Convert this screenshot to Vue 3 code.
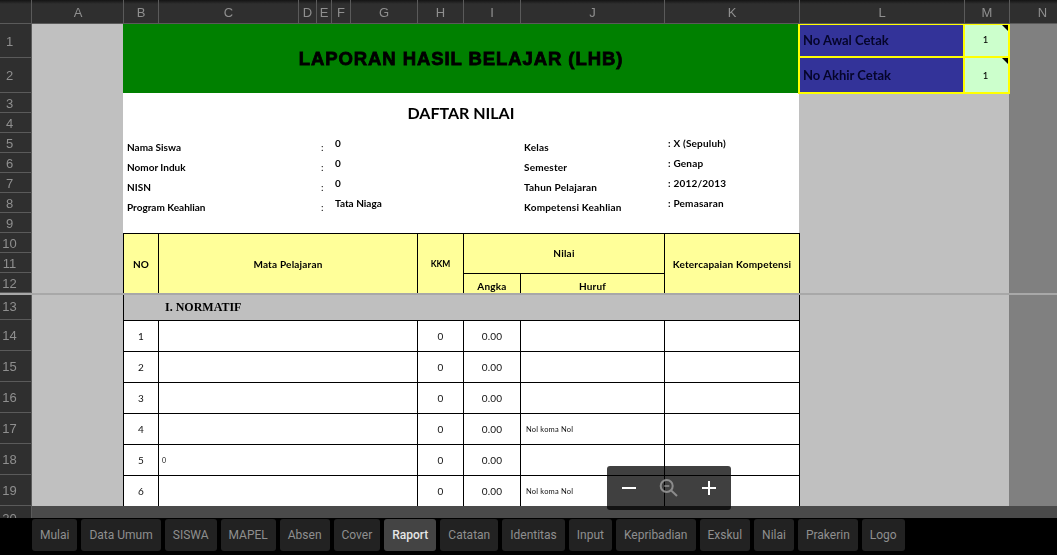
<script setup>
const cols = ['A','B','C','D','E','F','G','H','I','J','K','L','M','N']
const rowNums = Array.from({ length: 20 }, (_, i) => i + 1)
const info = [
  { row: 5, label: 'Nama Siswa', value: '0', rLabel: 'Kelas', rValue: ': X (Sepuluh)' },
  { row: 6, label: 'Nomor Induk', value: '0', rLabel: 'Semester', rValue: ': Genap' },
  { row: 7, label: 'NISN', value: '0', rLabel: 'Tahun Pelajaran', rValue: ': 2012/2013' },
  { row: 8, label: 'Program Keahlian', value: 'Tata Niaga', rLabel: 'Kompetensi Keahlian', rValue: ': Pemasaran' }
]
const rows = [
  { row: 14, no: 1, name: '', huruf: '' },
  { row: 15, no: 2, name: '', huruf: '' },
  { row: 16, no: 3, name: '', huruf: '' },
  { row: 17, no: 4, name: '', huruf: 'Nol koma Nol' },
  { row: 18, no: 5, name: '0', huruf: '' },
  { row: 19, no: 6, name: '', huruf: 'Nol koma Nol' }
]
const tabs = ['Mulai','Data Umum','SISWA','MAPEL','Absen','Cover','Raport','Catatan','Identitas','Input','Kepribadian','Exskul','Nilai','Prakerin','Logo']
</script>

<template>
  <div class="app">
    <div class="sheet">
      <div class="grid">
        <div class="corner"></div>
        <div v-for="c in cols" :key="c" class="colhead" :class="{ first: c === 'A', last: c === 'N' }">{{ c }}</div>
        <div v-for="n in rowNums" :key="n" class="rowhead" :style="{ gridRow: n + 1 }">{{ n }}</div>

        <div class="side-a"></div>
        <div class="side-lm"></div>
        <div class="side-n"></div>

        <div class="title">LAPORAN HASIL BELAJAR (LHB)</div>
        <div class="paper"></div>
        <div class="subtitle">DAFTAR NILAI</div>

        <div class="ctl-label r1">No Awal Cetak</div>
        <div class="ctl-value r1">1</div>
        <div class="ctl-label r2">No Akhir Cetak</div>
        <div class="ctl-value r2">1</div>

        <template v-for="i in info" :key="i.row">
          <div class="info i-label" :style="{ gridRow: i.row + 1 }">{{ i.label }}</div>
          <div class="info i-colon" :style="{ gridRow: i.row + 1 }">:</div>
          <div class="info i-value" :style="{ gridRow: i.row + 1 }">{{ i.value }}</div>
          <div class="info i-rlabel" :style="{ gridRow: i.row + 1 }">{{ i.rLabel }}</div>
          <div class="info i-rvalue" :style="{ gridRow: i.row + 1 }">{{ i.rValue }}</div>
        </template>

        <div class="th th-no">NO</div>
        <div class="th th-mapel">Mata Pelajaran</div>
        <div class="th th-kkm">KKM</div>
        <div class="th th-nilai">Nilai</div>
        <div class="th th-angka">Angka</div>
        <div class="th th-huruf">Huruf</div>
        <div class="th th-ket edge">Ketercapaian Kompetensi</div>

        <div class="section edge"><span>I. NORMATIF</span></div>

        <template v-for="r in rows" :key="r.row">
          <div class="td c-no" :style="{ gridRow: r.row + 1 }">{{ r.no }}</div>
          <div class="td c-name" :style="{ gridRow: r.row + 1 }">{{ r.name }}</div>
          <div class="td c-kkm" :style="{ gridRow: r.row + 1 }">0</div>
          <div class="td c-angka" :style="{ gridRow: r.row + 1 }">0.00</div>
          <div class="td c-huruf" :style="{ gridRow: r.row + 1 }">{{ r.huruf }}</div>
          <div class="td c-ket edge" :style="{ gridRow: r.row + 1 }"></div>
        </template>
      </div>

      <div class="freeze"></div>
      <div class="hscroll"></div>

      <div class="zoomer">
        <svg class="zbtn" viewBox="0 0 24 24" width="24" height="24"><path d="M5 12h14" stroke="#fff" stroke-width="2" fill="none"/></svg>
        <svg class="zbtn" viewBox="0 0 24 24" width="24" height="24" fill="none" stroke="#8c8c8c" stroke-width="2">
          <circle cx="9.7" cy="10" r="6"/>
          <path d="M14.2 14.5 20 20"/>
          <path d="M7.3 10h5" stroke-width="1.6"/>
        </svg>
        <svg class="zbtn" viewBox="0 0 24 24" width="24" height="24"><path d="M5 12h14M12 5v14" stroke="#fff" stroke-width="2" fill="none"/></svg>
      </div>
    </div>

    <div class="tabs">
      <div v-for="t in tabs" :key="t" class="tab" :class="{ active: t === 'Raport' }">{{ t }}</div>
    </div>
  </div>
</template>

<style>
html, body { margin: 0; background: #000; }
</style>

<style scoped>
.app {
  width: 1057px;
  height: 555px;
  overflow: hidden;
  display: flex;
  flex-direction: column;
  background: #000;
}
.sheet {
  position: relative;
  height: 518px;
  overflow: hidden;
  flex: none;
}
.grid {
  display: grid;
  grid-template-columns: [rh] 32px [a] 91px [b] 35px [c] 140px [d] 18px [e] 15px [f] 19px [g] 67px [h] 46px [i] 57px [j] 144px [k] 135px [l] 165px [m] 45px [n] 48px [end];
  grid-template-rows: 24px 34px 35px repeat(10, 20px) 27px repeat(6, 31px) 24px;
  font-family: Lato, "Liberation Sans", sans-serif;
  color: #000;
  will-change: transform;
}
.corner, .colhead {
  grid-row: 1;
  background: linear-gradient(#141414 0, #2f2f2f 4px);
  border-bottom: 1px solid #5a5a5a;
  box-sizing: border-box;
}
.corner { grid-column: 1; border-right: 1px solid #5a5a5a; }
.colhead {
  border-left: 1px solid #5a5a5a;
  display: flex;
  align-items: center;
  justify-content: center;
  font: 13px "Liberation Sans", sans-serif;
  color: #8f8f8f;
  padding-top: 1px;
}
.colhead.first { border-left: 0; padding-left: 1px; }
.colhead.last { padding-left: 18px; }
.rowhead {
  grid-column: 1;
  background: #2f2f2f;
  border-right: 1px solid #5a5a5a;
  border-bottom: 1px solid #5a5a5a;
  box-sizing: border-box;
  display: flex;
  align-items: center;
  justify-content: center;
  font: 13px "Liberation Sans", sans-serif;
  color: #8f8f8f;
  padding: 1px 12px 0 0;
}
.side-a { grid-column: a / b; grid-row: 2 / 22; background: #c0c0c0; }
.side-lm { grid-column: l / n; grid-row: 4 / 22; background: #c0c0c0; }
.side-n { grid-column: n / end; grid-row: 2 / 22; background: #808080; }

.title {
  grid-column: b / l;
  grid-row: 2 / 4;
  background: #008000;
  display: flex;
  align-items: center;
  justify-content: center;
  font: bold 18.5px "Liberation Sans", sans-serif;
  -webkit-text-stroke: 0.8px #000;
  letter-spacing: 0.92px;
}
.paper { grid-column: b / l; grid-row: 4 / 14; background: #fff; }
.subtitle {
  grid-column: b / l;
  grid-row: 4 / 6;
  display: flex;
  align-items: center;
  justify-content: center;
  font-weight: 700;
  font-size: 16px;
  padding-bottom: 2px;
  z-index: 1;
}

.ctl-label, .ctl-value {
  box-sizing: border-box;
  border: 2px solid #ffff00;
  z-index: 1;
  display: flex;
  align-items: center;
}
.ctl-label {
  grid-column: l / m;
  margin-left: -1px;
  background: #333399;
  border-right-width: 1px;
  padding: 0 0 2px 3px;
  font-weight: 700;
  font-size: 13px;
  color: #05052a;
}
.ctl-value {
  grid-column: m / n;
  margin-right: -1px;
  position: relative;
  background: #ccffcc;
  justify-content: center;
  border-left-width: 1px;
  padding: 0 2px 2px 0;
  font-size: 9.5px;
  font-weight: 500;
}
.ctl-value::after {
  content: "";
  position: absolute;
  top: 0;
  right: 0;
  border-top: 6px solid #000;
  border-left: 6px solid transparent;
}
.r1 { grid-row: 2; border-top-width: 1px; }
.r2 { grid-row: 3; margin-bottom: -1px; border-top-width: 0; padding-bottom: 0; }

.info {
  z-index: 1;
  font-size: 10px;
  font-weight: 700;
  white-space: nowrap;
  line-height: 12px;
}
.i-label { grid-column: b / f; padding: 8px 0 0 4px; }
.i-colon { grid-column: e / f; padding: 8px 0 0 5px; font-weight: 400; }
.i-value { grid-column: f / i; padding: 4px 0 0 4px; }
.i-rlabel { grid-column: j / k; padding: 8px 0 0 4px; letter-spacing: 0.2px; }
.i-rvalue { grid-column: k / l; padding: 4px 0 0 4px; letter-spacing: 0.2px; }

.th {
  z-index: 1;
  box-sizing: border-box;
  background: #ffff99;
  border-top: 1px solid #000;
  border-left: 1px solid #000;
  display: flex;
  align-items: center;
  justify-content: center;
  font-weight: 700;
  font-size: 10px;
  letter-spacing: 0.2px;
}
.th-no { grid-column: b / c; grid-row: 11 / 14; letter-spacing: 0; }
.th-mapel { grid-column: c / h; grid-row: 11 / 14; }
.th-kkm { grid-column: h / i; grid-row: 11 / 14; font-size: 8.5px; letter-spacing: 0; }
.th-nilai { grid-column: i / k; grid-row: 11 / 13; padding-bottom: 2px; }
.th-angka { grid-column: i / j; grid-row: 13; padding-top: 5px; }
.th-huruf { grid-column: j / k; grid-row: 13; padding-top: 5px; }
.th-ket { grid-column: k / l; grid-row: 11 / 14; }
.edge { box-shadow: 1px 0 0 #000; }

.section {
  grid-column: b / l;
  grid-row: 14;
  z-index: 1;
  box-sizing: border-box;
  background: #bfbfbf;
  border-left: 1px solid #000;
  display: flex;
  align-items: center;
  padding: 2px 0 0 41px;
  font: bold 12px "Liberation Serif", serif;
}

.td {
  z-index: 1;
  box-sizing: border-box;
  background: #fff;
  border-top: 1px solid #000;
  border-left: 1px solid #000;
  display: flex;
  align-items: center;
  justify-content: center;
  font-size: 10px;
  color: #111;
  letter-spacing: 0.2px;
}
.c-no { grid-column: b / c; }
.c-name { grid-column: c / h; justify-content: flex-start; padding-left: 3px; font-size: 7px; }
.c-kkm { grid-column: h / i; }
.c-angka { grid-column: i / j; }
.c-huruf { grid-column: j / k; justify-content: flex-start; padding-left: 5px; font-size: 7.5px; }
.c-ket { grid-column: k / l; }

.freeze {
  position: absolute;
  left: 0;
  right: 0;
  top: 293px;
  height: 2px;
  background: #a8a8a8;
  z-index: 3;
}
.hscroll {
  position: absolute;
  left: 32px;
  right: 0;
  top: 506px;
  height: 12px;
  background: #4a4a4a;
  z-index: 3;
}
.zoomer {
  position: absolute;
  left: 607px;
  top: 466px;
  width: 124px;
  height: 44px;
  z-index: 4;
  background: rgba(0, 0, 0, 0.75);
  border-radius: 3px;
  display: flex;
  align-items: center;
  justify-content: space-between;
  box-sizing: border-box;
  padding: 0 10px;
}

.tabs {
  flex: 1;
  display: flex;
  gap: 4px;
  padding: 1px 0 0 32px;
  background: #000;
  font: 12px Roboto, sans-serif;
}
.tab {
  height: 32px;
  box-sizing: border-box;
  padding: 0 8px 1px;
  background: #222;
  color: #8f8f8f;
  border-radius: 3px;
  display: flex;
  align-items: center;
}
.tab.active {
  background: #444;
  color: #e6e6e6;
  font-weight: 500;
}
</style>
